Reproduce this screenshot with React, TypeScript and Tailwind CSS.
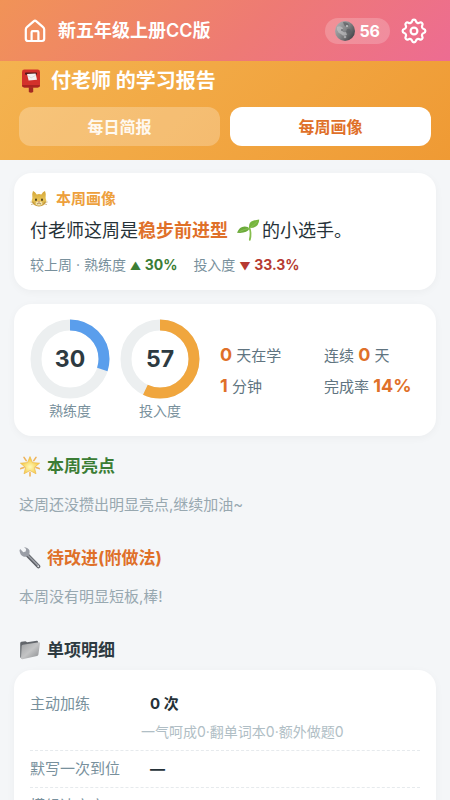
import React from 'react';

const HomeIcon = () => (
  <svg width="24" height="24" viewBox="0 0 24 24" fill="none" stroke="currentColor" strokeWidth="2.2" strokeLinecap="round" strokeLinejoin="round" aria-hidden="true">
    <path d="M2.8 10.4 Q2.8 9 3.9 8.1 L10.6 2.3 Q12 1.1 13.4 2.3 L20.1 8.1 Q21.2 9 21.2 10.4 V19.8 Q21.2 22 19 22 H5 Q2.8 22 2.8 19.8 Z" />
    <path d="M8.6 22 V13.2 Q8.6 12.2 9.6 12.2 H14.4 Q15.4 12.2 15.4 13.2 V22" />
  </svg>
);

const GearIcon = () => (
  <svg width="28" height="28" viewBox="0 0 28 28" fill="none" stroke="currentColor" strokeWidth="2.2" strokeLinejoin="round" aria-hidden="true">
    <path d="M12.05 4.19 A2 2 0 0 1 15.95 4.19 A2.4 2.4 0 0 0 19.56 5.69 A2 2 0 0 1 22.31 8.44 A2.4 2.4 0 0 0 23.81 12.05 A2 2 0 0 1 23.81 15.95 A2.4 2.4 0 0 0 22.31 19.56 A2 2 0 0 1 19.56 22.31 A2.4 2.4 0 0 0 15.95 23.81 A2 2 0 0 1 12.05 23.81 A2.4 2.4 0 0 0 8.44 22.31 A2 2 0 0 1 5.69 19.56 A2.4 2.4 0 0 0 4.19 15.95 A2 2 0 0 1 4.19 12.05 A2.4 2.4 0 0 0 5.69 8.44 A2 2 0 0 1 8.44 5.69 A2.4 2.4 0 0 0 12.05 4.19 Z" />
    <circle cx="14" cy="14" r="3.4" />
  </svg>
);

const MoonIcon = () => (
  <svg width="20" height="20" viewBox="0 0 20 20" aria-hidden="true">
    <defs>
      <linearGradient id="moon" x1="0" y1="0.1" x2="1" y2="0.8">
        <stop offset="0" stopColor="#b5b5b7" />
        <stop offset="0.5" stopColor="#858688" />
        <stop offset="1" stopColor="#3d3e42" />
      </linearGradient>
    </defs>
    <circle cx="10" cy="10" r="10" fill="url(#moon)" />
    <path d="M8 1 Q13 1 14 4 Q11 7 9 4 Z M12 8 Q16 7 16 11 Q13 14 11 11 Z" fill="#5d5e62" opacity="0.7" />
    <path d="M2 6 Q5 4 8 7 L7 10 Q9 12 11 11 L12 14 Q8 16 6 13 Q3 12 2 9 Z" fill="#c3c3c4" opacity="0.65" />
    <circle cx="7" cy="9" r="1.1" fill="#77787b" />
    <circle cx="12" cy="5" r="1" fill="#c8c8c9" />
    <circle cx="10" cy="16" r="1.3" fill="#a5a6a8" />
  </svg>
);

const PostboxIcon = () => (
  <svg width="24" height="26" viewBox="0 0 24 26" aria-hidden="true">
    <path d="M9.8 19 H14.2 V24 Q12 25.3 9.8 24 Z" fill="#a32a22" />
    <rect x="3" y="1.5" width="18" height="18" rx="2.4" fill="#d3312b" />
    <path d="M3 17 H21 Q21 19.5 18.6 19.5 H5.4 Q3 19.5 3 17 Z" fill="#aa2420" />
    <rect x="6" y="4.6" width="12" height="2.2" rx="0.8" fill="#54191a" />
    <path d="M8 6 L16.6 5.6 L18 11.8 L9.6 12.6 Z" fill="#f3f1f1" />
    <path d="M9 7.8 L12.2 9.8 L16.8 7.3" fill="none" stroke="#cdc7c9" strokeWidth="0.6" />
  </svg>
);

const CatIcon = () => (
  <svg width="18" height="18" viewBox="0 0 18 18" aria-hidden="true">
    <defs>
      <linearGradient id="cat" x1="0" y1="0" x2="0" y2="1">
        <stop offset="0" stopColor="#d3a537" />
        <stop offset="0.6" stopColor="#e8c457" />
        <stop offset="1" stopColor="#c2963a" />
      </linearGradient>
    </defs>
    <path d="M3 1 Q5.2 1.8 6.7 4.4 Q9 3.8 11.3 4.4 Q12.8 1.8 15 1 Q16.4 4 15.6 8 L16.4 11 Q15 16.4 9 16.4 Q3 16.4 1.6 11 L2.4 8 Q1.6 4 3 1 Z" fill="url(#cat)" />
    <ellipse cx="6" cy="9.8" rx="0.9" ry="1.3" fill="#463719" />
    <ellipse cx="12" cy="9.8" rx="0.9" ry="1.3" fill="#463719" />
    <ellipse cx="9" cy="13.4" rx="3.4" ry="2.1" fill="#f3e3ac" />
    <path d="M8 11.6 H10 L9 12.8 Z" fill="#b86658" />
    <path d="M9 12.8 Q8 14.4 6.9 13.8 M9 12.8 Q10 14.4 11.1 13.8" fill="none" stroke="#72531d" strokeWidth="0.6" />
    <path d="M0.4 12 L4 12.4 M17.6 12 L14 12.4 M1 14.6 L4.3 13.6 M17 14.6 L13.7 13.6" stroke="#a67b28" strokeWidth="0.5" />
  </svg>
);

const SeedlingIcon = () => (
  <svg className="mr-0.5 ml-2 inline-block align-[-4px]" width="24" height="22" viewBox="0 0 23 22" aria-hidden="true">
    <path d="M13.3 20.8 Q15 14 13 9" fill="none" stroke="#86bd4d" strokeWidth="1.8" strokeLinecap="round" />
    <path d="M13 9.6 Q10.4 14.8 0.5 13.8 Q3 7.2 8.4 7.4 Q11.4 7.5 13 9.6 Z" fill="#6cab3b" />
    <path d="M12.6 9 Q11.8 3.4 16.6 1.8 Q19.6 1 22.7 0.6 Q22.5 9.2 12.6 9 Z" fill="#76b53e" />
    <path d="M3 12.6 Q8 10 12.8 9.4 Q17 6.6 21 2.2" fill="none" stroke="#93c75f" strokeWidth="0.7" />
  </svg>
);

const StarIcon = () => (
  <svg width="22" height="22" viewBox="0 0 22 22" aria-hidden="true">
    <defs>
      <radialGradient id="star" cx="0.5" cy="0.6" r="0.5">
        <stop offset="0" stopColor="#fff9b8" />
        <stop offset="1" stopColor="#f5c840" />
      </radialGradient>
    </defs>
    <path d="M5 2.4 L7.2 5.6 M17 2.4 L14.8 5.6 M1.8 13.6 L5 12.4 M20.2 13.6 L17 12.4 M11 17.6 V21" stroke="#eeb35c" strokeWidth="1.6" strokeLinecap="round" />
    <path d="M11 1.6 L13.5 7.6 L20.6 8.2 L15.4 12.4 L17 18.8 L11 15.6 L5 18.8 L6.6 12.4 L1.4 8.2 L8.5 7.6 Z" fill="url(#star)" stroke="#edb94a" strokeWidth="0.7" strokeLinejoin="round" />
  </svg>
);

const WrenchIcon = () => (
  <svg width="22" height="22" viewBox="0 0 22 22" aria-hidden="true">
    <path d="M8.4 8.2 L19.4 19.4" stroke="#5d6066" strokeWidth="3.8" strokeLinecap="round" />
    <path d="M8.4 7.8 L19.2 18.6" stroke="#9b9ea5" strokeWidth="1.6" strokeLinecap="round" />
    <path d="M1.2 2.1 L4.3 5.2 L6.7 4.4 L7.1 2 L5 0.3 Q9.3 0.4 10.5 3.6 Q11.1 6.3 9.6 8.4 Q7.3 10.6 4.3 9.5 Q0.8 8 0.5 3.3 Z" fill="#9a9ea6" />
    <circle cx="19.3" cy="19.3" r="0.9" fill="#e2e4e8" />
  </svg>
);

const FolderIcon = () => (
  <svg width="22" height="22" viewBox="0 0 22 22" aria-hidden="true">
    <defs>
      <linearGradient id="folder" x1="0" y1="0" x2="1" y2="1">
        <stop offset="0" stopColor="#9fa1a3" />
        <stop offset="0.5" stopColor="#c3c4c5" />
        <stop offset="1" stopColor="#898b8e" />
      </linearGradient>
    </defs>
    <path d="M1.2 4.2 Q1.2 3 2.4 2.8 L6.5 2.2 L8.1 3.2 L17.8 1.8 Q19 1.7 19 3 V8 L2.5 19.5 Q1.2 19 1.2 17.6 Z" fill="#62666b" />
    <path d="M2.6 7 Q2.7 5.9 3.9 5.7 L19.9 3.2 Q21.1 3.1 20.9 4.4 L19.4 15.6 Q19.2 16.8 18 17.1 L3.4 20.2 Q1.9 20.3 2 18.8 Z" fill="url(#folder)" />
  </svg>
);

interface RingProps {
  value: number;
  label: string;
  color: string;
}

const Ring: React.FC<RingProps> = ({ value, label, color }) => {
  const length = 2 * Math.PI * 34;
  return (
    <div className="flex flex-col items-center gap-0.5">
      <div className="relative size-20">
        <svg className="size-20 -rotate-90" viewBox="0 0 80 80" aria-hidden="true">
          <circle cx="40" cy="40" r="34" fill="none" stroke="#eceff0" strokeWidth="11" />
          <circle cx="40" cy="40" r="34" fill="none" stroke={color} strokeWidth="11" strokeDasharray={`${(length * value) / 100} ${length}`} />
        </svg>
        <span className="absolute inset-0 flex items-center justify-center text-[23px] font-bold text-[#2d3a41]">{value}</span>
      </div>
      <span className="text-sm leading-5 text-[#78909c]">{label}</span>
    </div>
  );
};

interface SectionProps {
  icon: React.ReactNode;
  title: string;
  color: string;
  empty?: string;
}

const Section: React.FC<SectionProps> = ({ icon, title, color, empty }) => (
  <section className="px-[5px]">
    <h2 className={`flex items-center gap-1.5 text-[17px] leading-6 font-bold ${color}`}>
      {icon}
      {title}
    </h2>
    {empty && <p className="mt-4 mb-[30px] text-[15px] leading-[22px] text-[#98a8b0]">{empty}</p>}
  </section>
);

const details = [
  { name: '主动加练', value: '0 次', note: '一气呵成0·翻单词本0·额外做题0' },
  { name: '默写一次到位', value: '—' },
  { name: '模组达亮率', value: '—' },
];

const Card: React.FC<{ className: string; children: React.ReactNode }> = ({ className, children }) => (
  <div className={`rounded-[18px] bg-white px-4 shadow-[0_2px_8px_rgba(0,0,0,0.04)] ${className}`}>{children}</div>
);

export default function App() {
  return (
    <div className="h-screen overflow-y-auto bg-[#f4f6f8] font-['Inter','Noto_Sans_CJK_SC',sans-serif] text-[#263238] [scrollbar-width:none]">
      <header className="flex h-[61px] items-center bg-[linear-gradient(135deg,#f19357,#ee7a74_55%,#ed6c92)] pr-[22px] pl-[23px] text-white">
        <button aria-label="首页"><HomeIcon /></button>
        <h1 className="ml-[11px] flex-1 text-lg font-semibold">新五年级上册CC版</h1>
        <div className="flex h-[26px] items-center gap-1 rounded-full bg-white/20 px-2.5 text-base font-bold">
          <MoonIcon />
          56
        </div>
        <button aria-label="设置" className="ml-[10px]"><GearIcon /></button>
      </header>

      <div className="bg-[linear-gradient(135deg,#f4b350,#ef9a34)] px-[19px] pt-[6px] pb-[14px]">
        <h2 className="flex items-center gap-2 text-xl leading-7 font-bold text-white">
          <PostboxIcon />
          付老师 的学习报告
        </h2>
        <div className="mt-3 grid grid-cols-2 gap-[10px] text-base font-semibold">
          <button className="h-[39px] rounded-xl bg-white/25 text-white/90">每日简报</button>
          <button className="h-[39px] rounded-xl bg-white text-[#df7029]">每周画像</button>
        </div>
      </div>

      <main className="px-[14px] pt-[13px]">
        <Card className="pt-4 pb-3">
          <h3 className="flex items-center gap-2 text-[15px] leading-5 font-semibold text-[#eda03c]">
            <CatIcon />
            本周画像
          </h3>
          <p className="mt-1 text-lg leading-9">
            付老师这周是<strong className="font-bold text-[#df7029]">稳步前进型</strong><SeedlingIcon />的小选手。
          </p>
          <p className="mt-1 flex gap-4 text-sm leading-6 text-[#78909c]">
            <span>较上周 · 熟练度 <b className="font-bold text-[#3b7d35]"><span className="text-[11px]">▲</span> 30%</b></span>
            <span>投入度 <b className="font-bold text-[#b63a32]"><span className="text-[11px]">▼</span> 33.3%</b></span>
          </p>
        </Card>

        <Card className="mt-[14px] flex items-center gap-5 py-[15px]">
          <div className="flex gap-[10px]">
            <Ring value={30} label="熟练度" color="#5a9eec" />
            <Ring value={57} label="投入度" color="#f0a63e" />
          </div>
          <div className="grid flex-1 grid-cols-2 gap-x-2 gap-y-1 pt-0.5 text-[15px] leading-[26px] whitespace-nowrap text-[#607480]">
            <span><b className="text-lg leading-[26px] font-bold text-[#df7029]">0</b> 天在学</span>
            <span>连续 <b className="text-lg leading-[26px] font-bold text-[#df7029]">0</b> 天</span>
            <span><b className="text-lg leading-[26px] font-bold text-[#df7029]">1</b> 分钟</span>
            <span>完成率 <b className="text-lg leading-[26px] font-bold text-[#df7029]">14%</b></span>
          </div>
        </Card>

        <div className="mt-[18px]">
          <Section icon={<StarIcon />} title="本周亮点" color="text-[#3b7d35]" empty="这周还没攒出明显亮点,继续加油~" />
          <Section icon={<WrenchIcon />} title="待改进(附做法)" color="text-[#df7029]" empty="本周没有明显短板,棒!" />
          <Section icon={<FolderIcon />} title="单项明细" color="text-[#2d3a41]" />
        </div>

        <Card className="mt-2 py-4">
          <dl>
            {details.map((item) => (
              <div key={item.name} className="border-b border-dashed border-[#e6eaed] py-[7px]">
                <div className="flex text-[15px] leading-[22px]">
                  <dt className="w-[120px] text-[#78909c]">{item.name}</dt>
                  <dd className="font-bold text-[#263238]">{item.value}</dd>
                </div>
                {item.note && <dd className="mt-[6px] ml-[111px] text-sm leading-[22px] text-[#b0bec5]">{item.note}</dd>}
              </div>
            ))}
          </dl>
        </Card>
      </main>
    </div>
  );
}
